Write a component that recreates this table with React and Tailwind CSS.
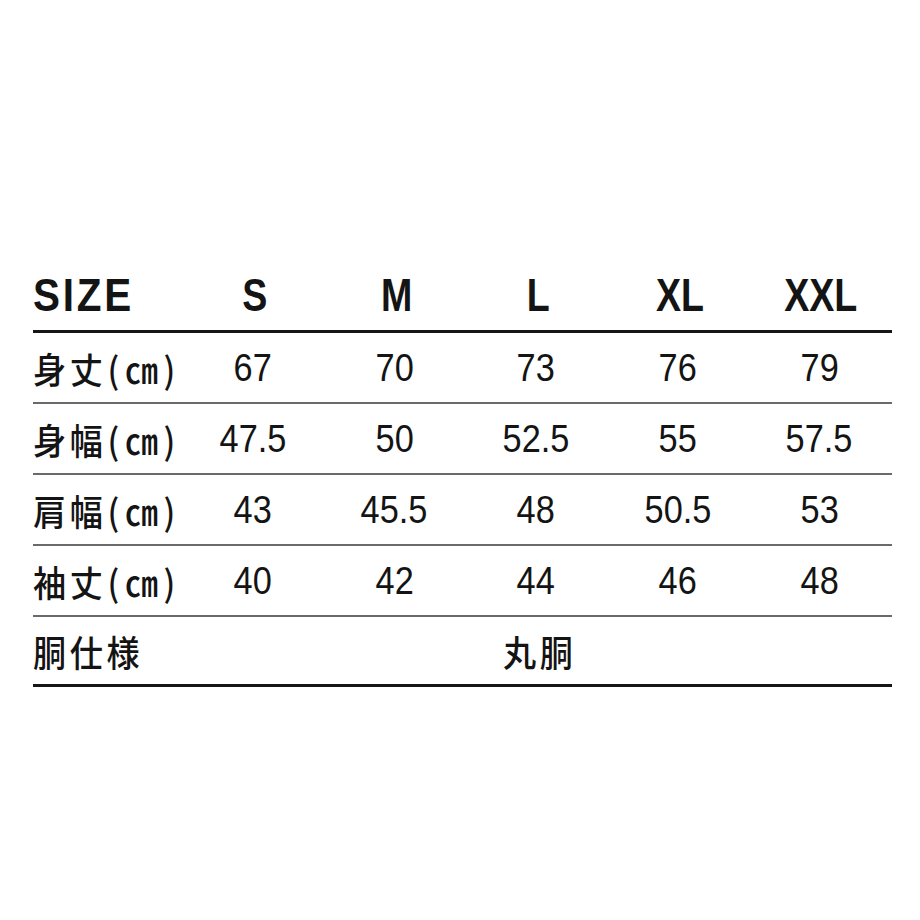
const sizes = ['S', 'M', 'L', 'XL', 'XXL']

const rows = [
  { label: '身丈', values: ['67', '70', '73', '76', '79'] },
  { label: '身幅', values: ['47.5', '50', '52.5', '55', '57.5'] },
  { label: '肩幅', values: ['43', '45.5', '48', '50.5', '53'] },
  { label: '袖丈', values: ['40', '42', '44', '46', '48'] },
]

const jp = { fontFamily: '"Noto Sans CJK JP", "Noto Sans", sans-serif' }
const num = { fontFamily: '"Liberation Sans", Arial, sans-serif' }

function App() {
  return (
    <div className="min-h-[920px] w-[920px] bg-white text-[#141414]">
      <div className="pt-[259px] pl-[33px] w-[892px]">
        {/* header */}
        <div className="grid grid-cols-[151px_repeat(5,1fr)] h-[74px] items-center border-b-[3px] border-[#161616]" style={num}>
          <div className="text-[47px] font-bold leading-none tracking-[0.07em]">
            <span className="inline-block scale-x-[0.86] origin-left">SIZE</span>
          </div>
          {sizes.map(s => (
            <div key={s} className="text-center text-[47px] font-bold leading-none">
              <span className="inline-block scale-x-[0.8]">{s}</span>
            </div>
          ))}
        </div>

        {rows.map(r => (
          <div key={r.label} className="grid grid-cols-[151px_repeat(5,1fr)] h-[71px] items-center border-b-2 border-[#6a6a6a]">
            <div className="text-[36px] font-medium leading-none whitespace-nowrap tracking-[4px]" style={jp}>
              <span className="inline-block scale-x-[0.92] origin-left">
                {r.label}
                <span className="ml-[1px]">(</span>
                <span className="mx-[2px]">㎝</span>
                <span>)</span>
              </span>
            </div>
            {r.values.map((v, i) => (
              <div key={i} className="text-center text-[39px] leading-none pr-[4px]" style={num}>
                <span className="inline-block scale-x-[0.88]">{v}</span>
              </div>
            ))}
          </div>
        ))}

        {/* body type */}
        <div className="grid grid-cols-[151px_1fr] h-[70px] items-center border-b-[3px] border-[#161616] tracking-[4px]" style={jp}>
          <div className="text-[36px] font-medium leading-none">
            <span className="inline-block scale-x-[0.92] origin-left">胴仕様</span>
          </div>
          <div className="text-center text-[36px] font-medium leading-none">
            <span className="inline-block scale-x-[0.92] pl-[4px]">丸胴</span>
          </div>
        </div>
      </div>
    </div>
  )
}

export default App
